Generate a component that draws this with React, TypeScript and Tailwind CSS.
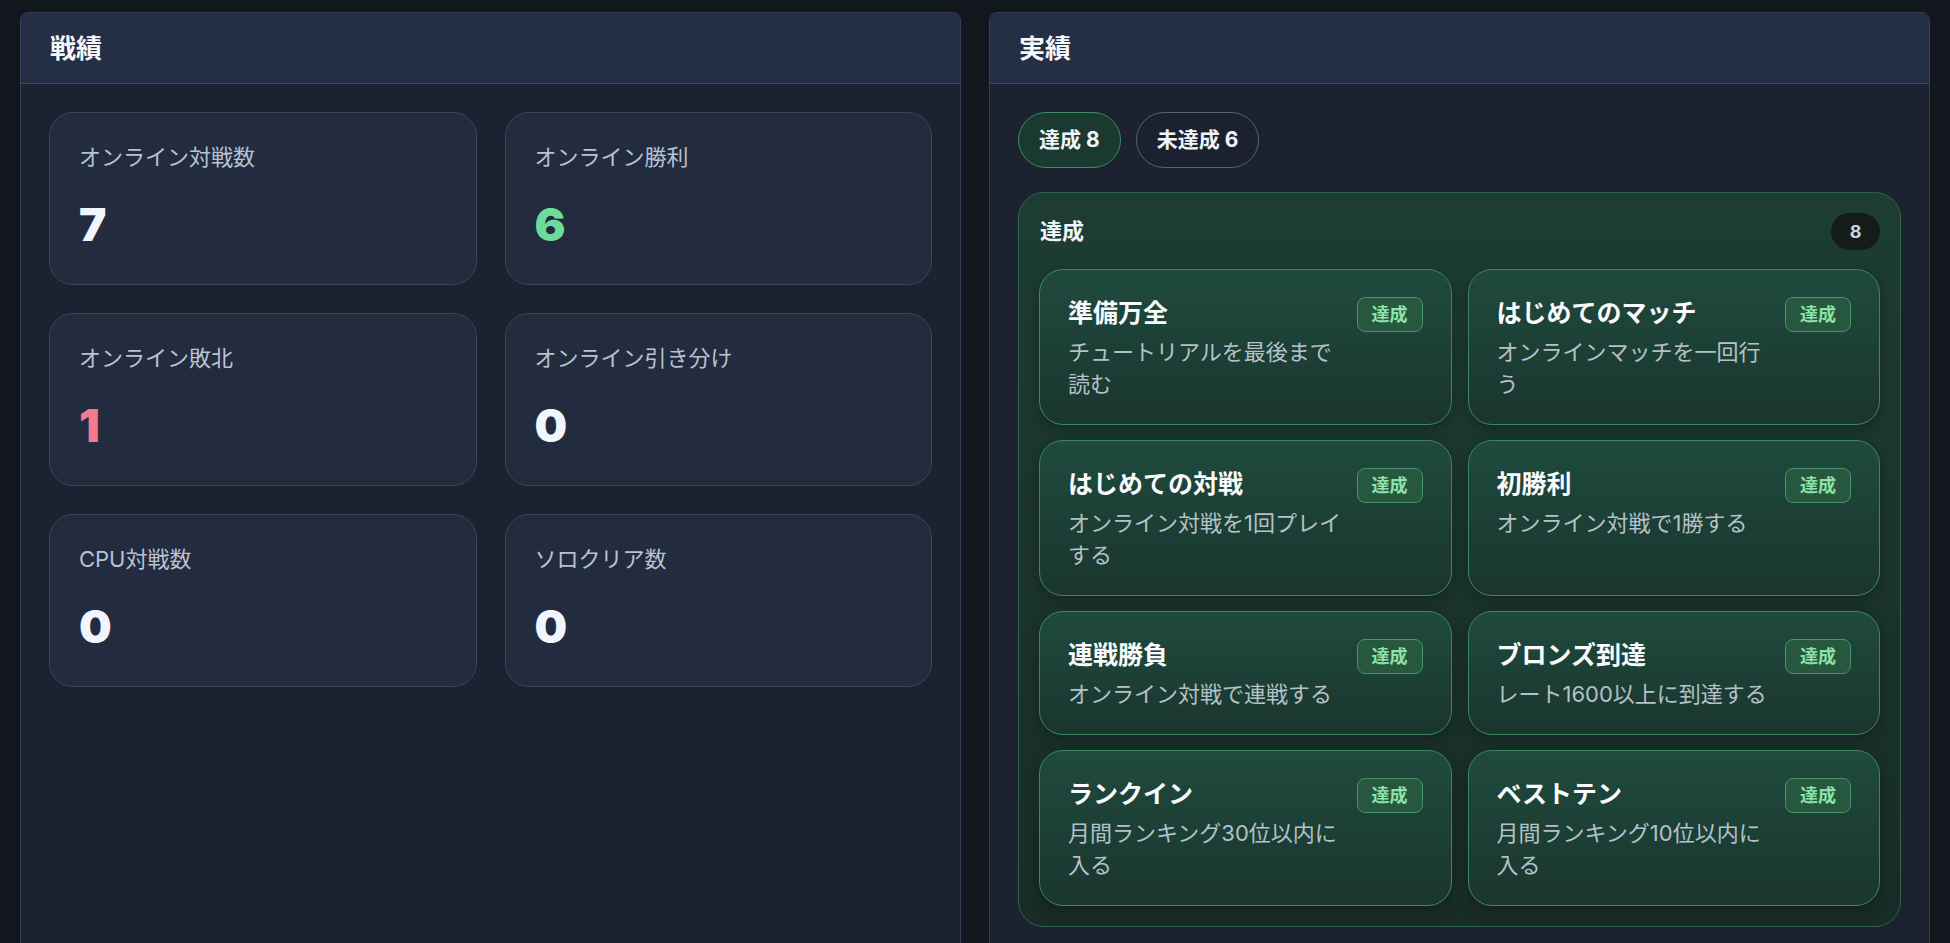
import React from "react";

const stats = [
  { label: "オンライン対戦数", value: "7", color: "text-[#f1f5fd]" },
  { label: "オンライン勝利", value: "6", color: "text-[#6ddc9a]" },
  { label: "オンライン敗北", value: "1", color: "text-[#f47a8e]" },
  { label: "オンライン引き分け", value: "0", color: "text-[#f1f5fd]" },
  { label: "CPU対戦数", value: "0", color: "text-[#f1f5fd]" },
  { label: "ソロクリア数", value: "0", color: "text-[#f1f5fd]" },
];

const achievements = [
  { title: "準備万全", desc: "チュートリアルを最後まで\n読む" },
  { title: "はじめてのマッチ", desc: "オンラインマッチを一回行\nう" },
  { title: "はじめての対戦", desc: "オンライン対戦を1回プレイ\nする" },
  { title: "初勝利", desc: "オンライン対戦で1勝する" },
  { title: "連戦勝負", desc: "オンライン対戦で連戦する" },
  { title: "ブロンズ到達", desc: "レート1600以上に到達する" },
  { title: "ランクイン", desc: "月間ランキング30位以内に\n入る" },
  { title: "ベストテン", desc: "月間ランキング10位以内に\n入る" },
];

const Panel = ({ title, children }: { title: string; children: React.ReactNode }) => {
  return (
    <section className="flex flex-col overflow-hidden rounded-lg border border-[#323e57] bg-[#1c2230]">
      <div className="flex h-[71px] items-center border-b border-[#3c4a67] bg-[#242e44] px-[29px]">
        <h2 className="text-[26px] font-bold text-[#f5f7fb]">{title}</h2>
      </div>
      <div className="flex-1 p-7">{children}</div>
    </section>
  );
};

const App = () => {
  return (
    <div className="grid min-h-screen grid-cols-2 gap-7 bg-[#12161d] px-5 pt-3 font-['Inter','Noto_Sans_CJK_JP',sans-serif]">
      <Panel title="戦績">
        <div className="grid grid-cols-2 gap-7">
          {stats.map((s) => (
            <div
              key={s.label}
              className="h-[173px] rounded-[24px] border border-[#39465f] bg-[#232c3e] px-[29px] pt-7"
            >
              <p className="text-[22px] leading-[32px] text-[#b8c2d3]">{s.label}</p>
              <p className={`mt-7 text-[46px] font-black leading-none ${s.color}`}>{s.value}</p>
            </div>
          ))}
        </div>
      </Panel>

      <Panel title="実績">
        <div className="mb-6 flex gap-[15px]">
          <button className="h-14 rounded-full border border-[#3f8c5f] bg-[#1b3a2f] px-5 text-[21px] font-bold text-[#f1f5f9]">
            達成 8
          </button>
          <button className="h-14 rounded-full border border-[#58617a] bg-[#1c2130] px-5 text-[21px] font-bold text-[#f1f5f9]">
            未達成 6
          </button>
        </div>

        <div className="rounded-[26px] border border-[#2d6448] bg-gradient-to-b from-[#1d3d32] to-[#182c27] p-5">
          <div className="mb-[19px] flex h-[37px] items-center justify-between">
            <h3 className="pl-px text-[22px] font-bold text-[#f1f5f9]">達成</h3>
            <span className="flex h-[37px] w-[49px] items-center justify-center rounded-full bg-[#131c1b] text-[18px] font-bold text-[#cbd5e1]">
              8
            </span>
          </div>

          <div className="grid grid-cols-2 gap-x-4 gap-y-[15px]">
            {achievements.map((a) => (
              <div
                key={a.title}
                className="rounded-[24px] border border-[#3c875e] bg-gradient-to-b from-[#1f4a3d] to-[#1a362e] px-7 pb-6 pt-[27px] shadow-[0_4px_14px_rgba(0,0,0,0.28)]"
              >
                <div className="flex items-start justify-between gap-3">
                  <div className="min-w-0 flex-1">
                    <h4 className="mb-[7px] text-[25px] font-bold leading-[32px] text-[#f8fafc]">{a.title}</h4>
                    <p className="whitespace-pre text-[22px] leading-[32px] text-[#b5c1c8]">{a.desc}</p>
                  </div>
                  <span className="shrink-0 rounded-lg border border-[#47946a] bg-[#28573f] px-[14px] text-[18px] font-bold leading-[33px] text-[#8be3a8]">
                    達成
                  </span>
                </div>
              </div>
            ))}
          </div>
        </div>
      </Panel>
    </div>
  );
};

export default App;
